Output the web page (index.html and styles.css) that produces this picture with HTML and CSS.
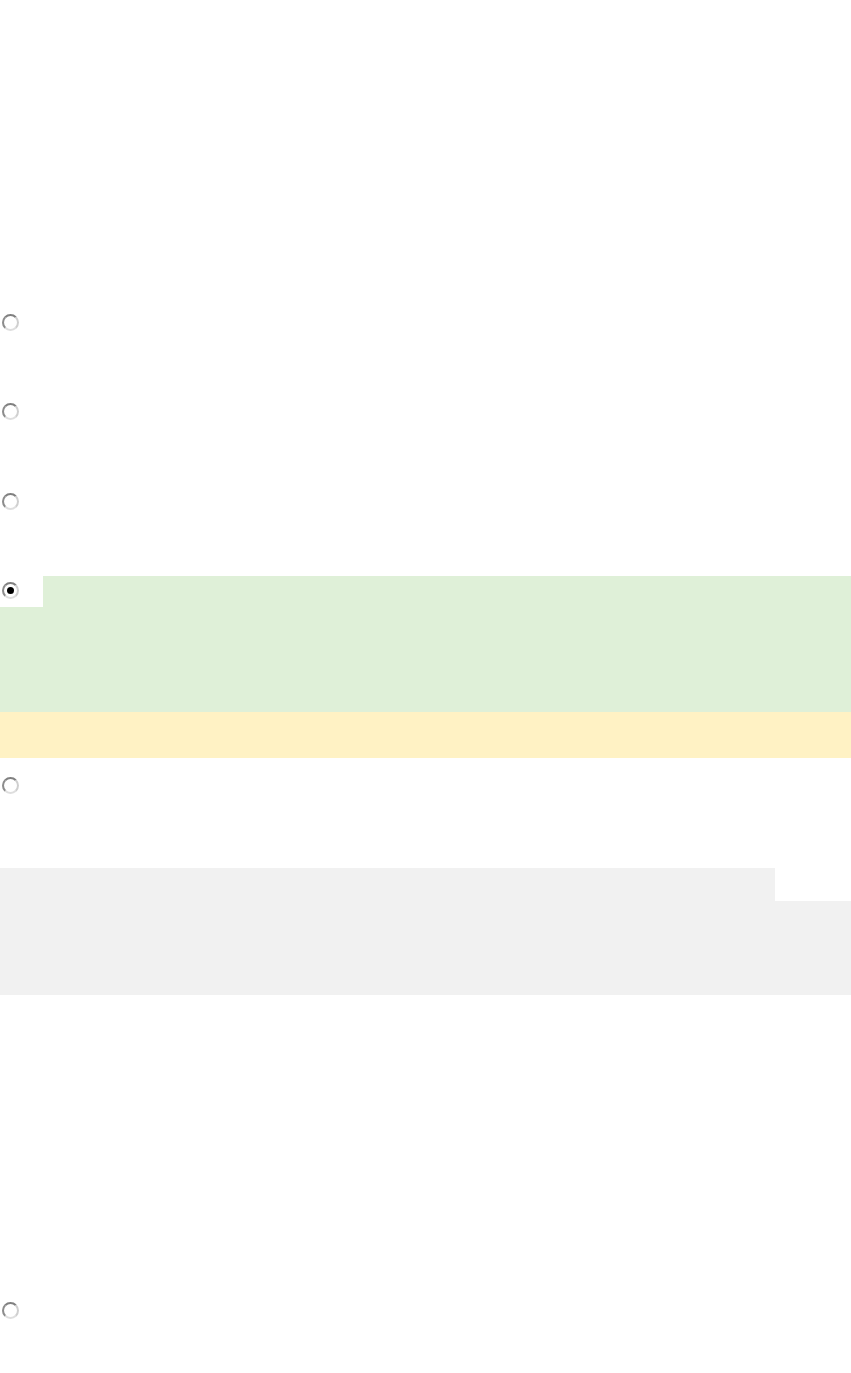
FILE: index.html
```html
<!DOCTYPE html>
<html>
<head>
<meta charset="utf-8">
<title>Options</title>
<link rel="stylesheet" href="styles.css">
</head>
<body>
<div class="page">
  <div class="top-space"></div>
  <div class="opt opt-1"><input class="radio" type="radio" name="q"></div>
  <div class="opt opt-2"><input class="radio" type="radio" name="q"></div>
  <div class="opt opt-3"><input class="radio" type="radio" name="q"></div>
  <div class="answer">
    <div class="answer-cell"><input class="radio" type="radio" name="q" checked></div>
  </div>
  <div class="note"></div>
  <div class="opt opt-5"><input class="radio" type="radio" name="q"></div>
  <div class="panel">
    <div class="panel-top"><div class="panel-fill"></div><div class="panel-notch"></div></div>
  </div>
  <div class="bottom-space"></div>
  <div class="opt opt-6"><input class="radio" type="radio" name="q"></div>
</div>
</body>
</html>
```
FILE: styles.css
```css
html, body {
  margin: 0;
  padding: 0;
  background: #ffffff;
  font-family: "Liberation Sans", Arial, sans-serif;
}
.page {
  width: 851px;
  height: 1373px;
  display: flex;
  flex-direction: column;
  overflow: hidden;
}
.top-space {
  height: 314px;
  flex: none;
}
.opt {
  flex: none;
  padding-left: 2px;
  box-sizing: border-box;
}
.opt-1 { height: 89px; }
.opt-2 { height: 90px; }
.opt-3 { height: 83px; }
.opt-5 { height: 110px; padding-top: 19px; }
.opt-6 { height: 70px; padding-top: 1px; }
.radio {
  appearance: none;
  -webkit-appearance: none;
  display: block;
  margin: 0;
  width: 17px;
  height: 17px;
  border-radius: 50%;
  box-sizing: border-box;
  border: 2px solid;
  border-color: #808080 #cfcfcf #dedede #8c8c8c;
  background: #ffffff;
  position: relative;
}
.radio:checked::after {
  content: "";
  position: absolute;
  left: 3px;
  top: 3px;
  width: 7px;
  height: 7px;
  border-radius: 50%;
  background: #000000;
}
.answer {
  flex: none;
  height: 136px;
  background: #dff0d8;
}
.answer-cell {
  width: 43px;
  height: 31px;
  background: #ffffff;
  padding: 6px 0 0 2px;
  box-sizing: border-box;
}
.note {
  flex: none;
  height: 46px;
  background: #fff2c4;
}
.panel {
  flex: none;
  height: 127px;
  background: #f1f1f1;
}
.panel-top {
  display: flex;
  height: 33px;
}
.panel-fill {
  flex: 1;
}
.panel-notch {
  width: 76px;
  background: #ffffff;
}
.bottom-space {
  flex: none;
  height: 306px;
}
```
